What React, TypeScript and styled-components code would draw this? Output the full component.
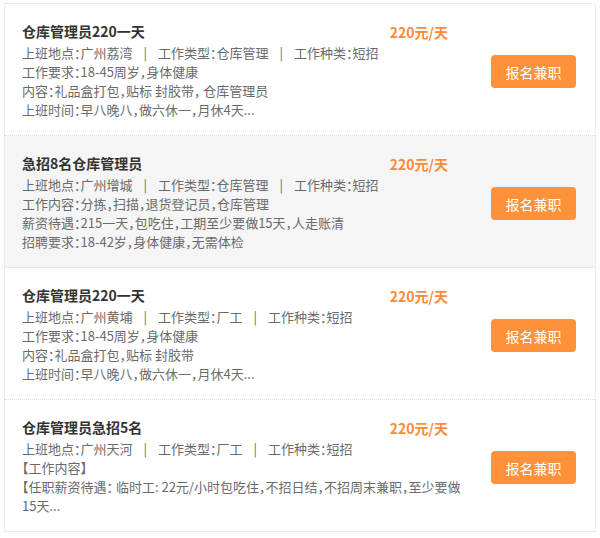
import styled, { createGlobalStyle } from 'styled-components'

const GlobalStyle = createGlobalStyle`
  body {
    margin: 0;
    background: #fff;
    font-family: "Noto Sans CJK SC", "Noto Sans", sans-serif;
  }
`

type Job = {
  title: string
  price: string
  place: string
  kind: string
  term: string
  lines: string[]
}

const jobs: Job[] = [
  {
    title: '仓库管理员220一天',
    price: '220元/天',
    place: '广州荔湾',
    kind: '仓库管理',
    term: '短招',
    lines: ['工作要求：18-45周岁，身体健康', '内容：礼品盒打包，贴标 封胶带， 仓库管理员', '上班时间：早八晚八，做六休一，月休4天...'],
  },
  {
    title: '急招8名仓库管理员',
    price: '220元/天',
    place: '广州增城',
    kind: '仓库管理',
    term: '短招',
    lines: ['工作内容：分拣，扫描，退货登记员，仓库管理', '薪资待遇：215一天，包吃住，工期至少要做15天，人走账清', '招聘要求：18-42岁，身体健康，无需体检'],
  },
  {
    title: '仓库管理员220一天',
    price: '220元/天',
    place: '广州黄埔',
    kind: '厂工',
    term: '短招',
    lines: ['工作要求：18-45周岁，身体健康', '内容：礼品盒打包，贴标 封胶带', '上班时间：早八晚八，做六休一，月休4天...'],
  },
  {
    title: '仓库管理员急招5名',
    price: '220元/天',
    place: '广州天河',
    kind: '厂工',
    term: '短招',
    lines: ['【工作内容】', '【任职薪资待遇： 临时工: 22元/小时包吃住，不招日结，不招周末兼职，至少要做15天...'],
  },
]

const List = styled.div`
  margin: 3px 4px 0;
  border: 1px dotted #dcdcdc;
  border-bottom: none;
`

const Card = styled.div<{ $shaded?: boolean }>`
  display: flex;
  align-items: center;
  justify-content: space-between;
  padding: 16px 19px 15px 17px;
  background: ${p => (p.$shaded ? '#f5f5f5' : '#fff')};
  border-bottom: 1px dotted #dcdcdc;
  min-height: 100px;
`

const Info = styled.div`
  width: 446px;
`

const Head = styled.div`
  display: flex;
  justify-content: space-between;
  align-items: center;
  height: 20px;
  margin-bottom: 2px;
  padding-right: 20px;
`

const Title = styled.div`
  font-size: 14px;
  font-weight: bold;
  color: #333;
`

const Price = styled.div`
  white-space: nowrap;
  font-size: 14px;
  font-weight: bold;
  color: #ff8a34;
  margin-top: 2px;
`

const Line = styled.div`
  font-size: 13px;
  line-height: 19px;
  color: #6a6a6a;
  font-feature-settings: "halt";
`

const Sep = styled.span`
  margin: 0 11px;
`

const Apply = styled.button`
  width: 85px;
  height: 33px;
  margin-top: 3px;
  border: none;
  border-radius: 4px;
  background: #ff913b;
  color: #fff;
  font-family: inherit;
  font-size: 14px;
  cursor: pointer;
`

export default function App() {
  return (
    <>
      <GlobalStyle />
      <List>
        {jobs.map((job, i) => (
          <Card key={i} $shaded={i === 1}>
            <Info>
              <Head>
                <Title>{job.title}</Title>
                <Price>{job.price}</Price>
              </Head>
              <Line>
                上班地点：{job.place}
                <Sep>|</Sep>
                工作类型：{job.kind}
                <Sep>|</Sep>
                工作种类：{job.term}
              </Line>
              {job.lines.map((l, j) => (
                <Line key={j}>{l}</Line>
              ))}
            </Info>
            <Apply>报名兼职</Apply>
          </Card>
        ))}
      </List>
    </>
  )
}
